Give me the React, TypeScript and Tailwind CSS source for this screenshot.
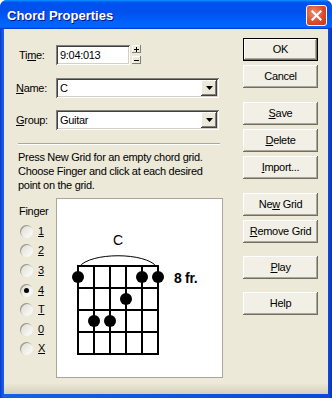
import React from "react";

const U = ({ children }: { children: React.ReactNode }) => (
  <span className="underline underline-offset-[1px]">{children}</span>
);

function Btn({ children, def, mt }: { children: React.ReactNode; def?: boolean; mt: string }) {
  return (
    <div
      className={`${mt} w-[75px] h-[23px] flex items-center justify-center bg-[#f1efe6] ${
        def
          ? "border border-black shadow-[inset_-1px_-1px_#716f64,inset_1px_1px_#ffffff,inset_-2px_-2px_#aca899]"
          : "shadow-[inset_-1px_-1px_#716f64,inset_1px_1px_#ffffff,inset_-2px_-2px_#aca899]"
      }`}
    >
      <span className="leading-[13px]">{children}</span>
    </div>
  );
}

function Sunken({ className, children }: { className: string; children?: React.ReactNode }) {
  return (
    <div
      className={`${className} bg-white shadow-[inset_1px_1px_#808080,inset_-1px_-1px_#ffffff,inset_2px_2px_#404040,inset_-2px_-2px_#d4d0c8]`}
    >
      {children}
    </div>
  );
}

function Combo({ value }: { value: string }) {
  return (
    <Sunken className="w-[163px] h-[20px] flex items-center pl-[4px] pr-[2px]">
      <span className="flex-1 leading-[13px]">{value}</span>
      <div className="w-[16px] h-[16px] bg-[#ece9d8] flex items-center justify-center shadow-[inset_-1px_-1px_#404040,inset_1px_1px_#ffffff,inset_-2px_-2px_#808080]">
        <svg width="7" height="4" viewBox="0 0 7 4">
          <path d="M0 0H7L3.5 4Z" fill="#000" />
        </svg>
      </div>
    </Sunken>
  );
}

function Radio({ label, checked }: { label: string; checked?: boolean }) {
  return (
    <div className="flex items-center h-full">
      <div className="ml-[4px] w-[13px] h-[13px] rounded-full bg-[linear-gradient(135deg,#dcd9cc,#ffffff)] shadow-[inset_1px_1px_#9c9a8f] flex items-center justify-center">
        {checked && <div className="w-[5px] h-[5px] rounded-full bg-black" />}
      </div>
      <span className="ml-[5px] leading-[13px]">
        <U>{label}</U>
      </span>
    </div>
  );
}

function ChordGrid() {
  const xs = [78, 94, 110, 126, 142, 158];
  const ys = [266, 288, 310, 332, 354];
  const dots: [number, number][] = [
    [78, 277],
    [142, 277],
    [158, 277],
    [126, 299],
    [94, 321],
    [110, 321],
  ];
  return (
    <svg width="165" height="178" viewBox="57 199 165 178">
      <path d="M79 267 C 90 252, 146 252, 157 267" fill="none" stroke="#000" strokeWidth="1" />
      {xs.map((x) => (
        <line key={x} x1={x} y1={265} x2={x} y2={355} stroke="#000" strokeWidth="2" />
      ))}
      {ys.map((y) => (
        <line key={y} x1={77} y1={y} x2={159} y2={y} stroke="#000" strokeWidth="2" />
      ))}
      {dots.map(([x, y], i) => (
        <circle key={i} cx={x} cy={y} r="6" fill="#000" />
      ))}
      <text
        x="118"
        y="245"
        textAnchor="middle"
        fontFamily="'Liberation Sans', Arial, sans-serif"
        fontSize="14"
        fill="#000"
      >
        C
      </text>
      <text
        x="174"
        y="283"
        fontFamily="'Liberation Sans', Arial, sans-serif"
        fontSize="14"
        fontWeight="bold"
        fill="#000"
      >
        8 fr.
      </text>
    </svg>
  );
}

export default function App() {
  const radios: { l: string; h: string; c?: boolean }[] = [
    { l: "1", h: "h-[20px]" },
    { l: "2", h: "h-[19px]" },
    { l: "3", h: "h-[20px]" },
    { l: "4", h: "h-[20px]", c: true },
    { l: "T", h: "h-[19px]" },
    { l: "0", h: "h-[20px]" },
    { l: "X", h: "h-[19px]" },
  ];
  return (
    <div className="w-[332px] h-[398px] flex flex-col bg-[linear-gradient(to_right,#0a37c8,#1660e8_3px,#0a47e0_329px,#0a30b8)] rounded-t-[7px] overflow-hidden font-['Liberation_Sans',Arial,sans-serif] text-[11px] text-black">
      {/* Title bar */}
      <div className="h-[29px] flex items-start bg-[linear-gradient(180deg,#0997ff,#0053ee_8%,#0050ee_40%,#0066ff_88%,#0066ff_93%,#005bff_95%,#003dd7_96%,#003dd7)]">
        <span className="ml-[7px] mt-[7px] leading-[17px] text-[13px] font-bold text-white [text-shadow:1px_1px_#0f1089]">
          Chord Properties
        </span>
        <div className="ml-auto mr-[5px] mt-[5px] w-[21px] h-[21px] rounded-[3px] border border-white bg-[radial-gradient(circle_at_35%_35%,#f08a6c,#d9472a_60%,#c0391b)] flex items-center justify-center">
          <svg width="11" height="11" viewBox="0 0 11 11">
            <path d="M1.5 1.5L9.5 9.5M9.5 1.5L1.5 9.5" stroke="#fff" strokeWidth="2.2" strokeLinecap="square" />
          </svg>
        </div>
      </div>

      {/* Body */}
      <div className="flex-1 mx-[4px] mb-[4px] flex tracking-[-0.3px] bg-[linear-gradient(to_bottom,#ece9d8_0,#ece9d8_354px,#d5d0bb_365px)]">
        {/* Left column */}
        <div className="w-[239px] pl-[12px] pt-[16px] flex flex-col">
          {/* Time */}
          <div className="flex items-center h-[20px]">
            <span className="w-[40px] pl-[3px] leading-[13px]">
              Ti<U>m</U>e:
            </span>
            <Sunken className="w-[74px] h-[20px] flex items-center pl-[4px]">
              <span className="leading-[13px]">9:04:013</span>
            </Sunken>
            <div className="ml-[2px] flex flex-col gap-[1px] self-start">
              <div className="w-[9px] h-[8px] bg-[#ece9d8] flex items-center justify-center shadow-[inset_-1px_-1px_#808080,inset_1px_1px_#ffffff]">
                <svg width="5" height="5" viewBox="0 0 5 5">
                  <path d="M0 2.5H5M2.5 0V5" stroke="#000" strokeWidth="1" />
                </svg>
              </div>
              <div className="mt-[2px] w-[9px] h-[8px] bg-[#ece9d8] flex items-center justify-center shadow-[inset_-1px_-1px_#808080,inset_1px_1px_#ffffff]">
                <svg width="5" height="5" viewBox="0 0 5 5">
                  <path d="M0 2.5H5" stroke="#000" strokeWidth="1" />
                </svg>
              </div>
            </div>
          </div>
          {/* Name */}
          <div className="flex items-center h-[20px] mt-[13px]">
            <span className="w-[40px] leading-[13px]">
              <U>N</U>ame:
            </span>
            <Combo value="C" />
          </div>
          {/* Group */}
          <div className="flex items-center h-[20px] mt-[12px]">
            <span className="w-[40px] leading-[13px]">
              <U>G</U>roup:
            </span>
            <Combo value="Guitar" />
          </div>
          {/* Separator */}
          <div className="mt-[13px] ml-[2px] w-[202px] h-[2px] border-t border-[#aca899] border-b border-b-white" />
          {/* Text */}
          <div className="mt-[5px] ml-[2px] leading-[14px]">
            Press New Grid for an empty chord grid.
            <br />
            Choose Finger and click at each desired
            <br />
            point on the grid.
          </div>
          {/* Finger + grid */}
          <div className="mt-[6px] flex">
            <div className="w-[40px] flex flex-col">
              <span className="mt-[7px] ml-[3px] leading-[13px]">Finger</span>
              <div className="mt-[3px] flex flex-col">
                {radios.map((r) => (
                  <div key={r.l} className={r.h}>
                    <Radio label={r.l} checked={r.c} />
                  </div>
                ))}
              </div>
            </div>
            <div className="w-[167px] h-[180px] bg-white border border-[#aca899]">
              <ChordGrid />
            </div>
          </div>
        </div>

        {/* Right column */}
        <div className="w-[75px] pt-[9px] flex flex-col">
          <Btn def mt="mt-0">OK</Btn>
          <Btn mt="mt-[4px]">Cancel</Btn>
          <Btn mt="mt-[14px]">
            <U>S</U>ave
          </Btn>
          <Btn mt="mt-[4px]">
            <U>D</U>elete
          </Btn>
          <Btn mt="mt-[4px]">
            <U>I</U>mport...
          </Btn>
          <Btn mt="mt-[14px]">
            Ne<U>w</U> Grid
          </Btn>
          <Btn mt="mt-[4px]">
            <U>R</U>emove Grid
          </Btn>
          <Btn mt="mt-[13px]">
            <U>P</U>lay
          </Btn>
          <Btn mt="mt-[13px]">Help</Btn>
        </div>
      </div>
    </div>
  );
}
